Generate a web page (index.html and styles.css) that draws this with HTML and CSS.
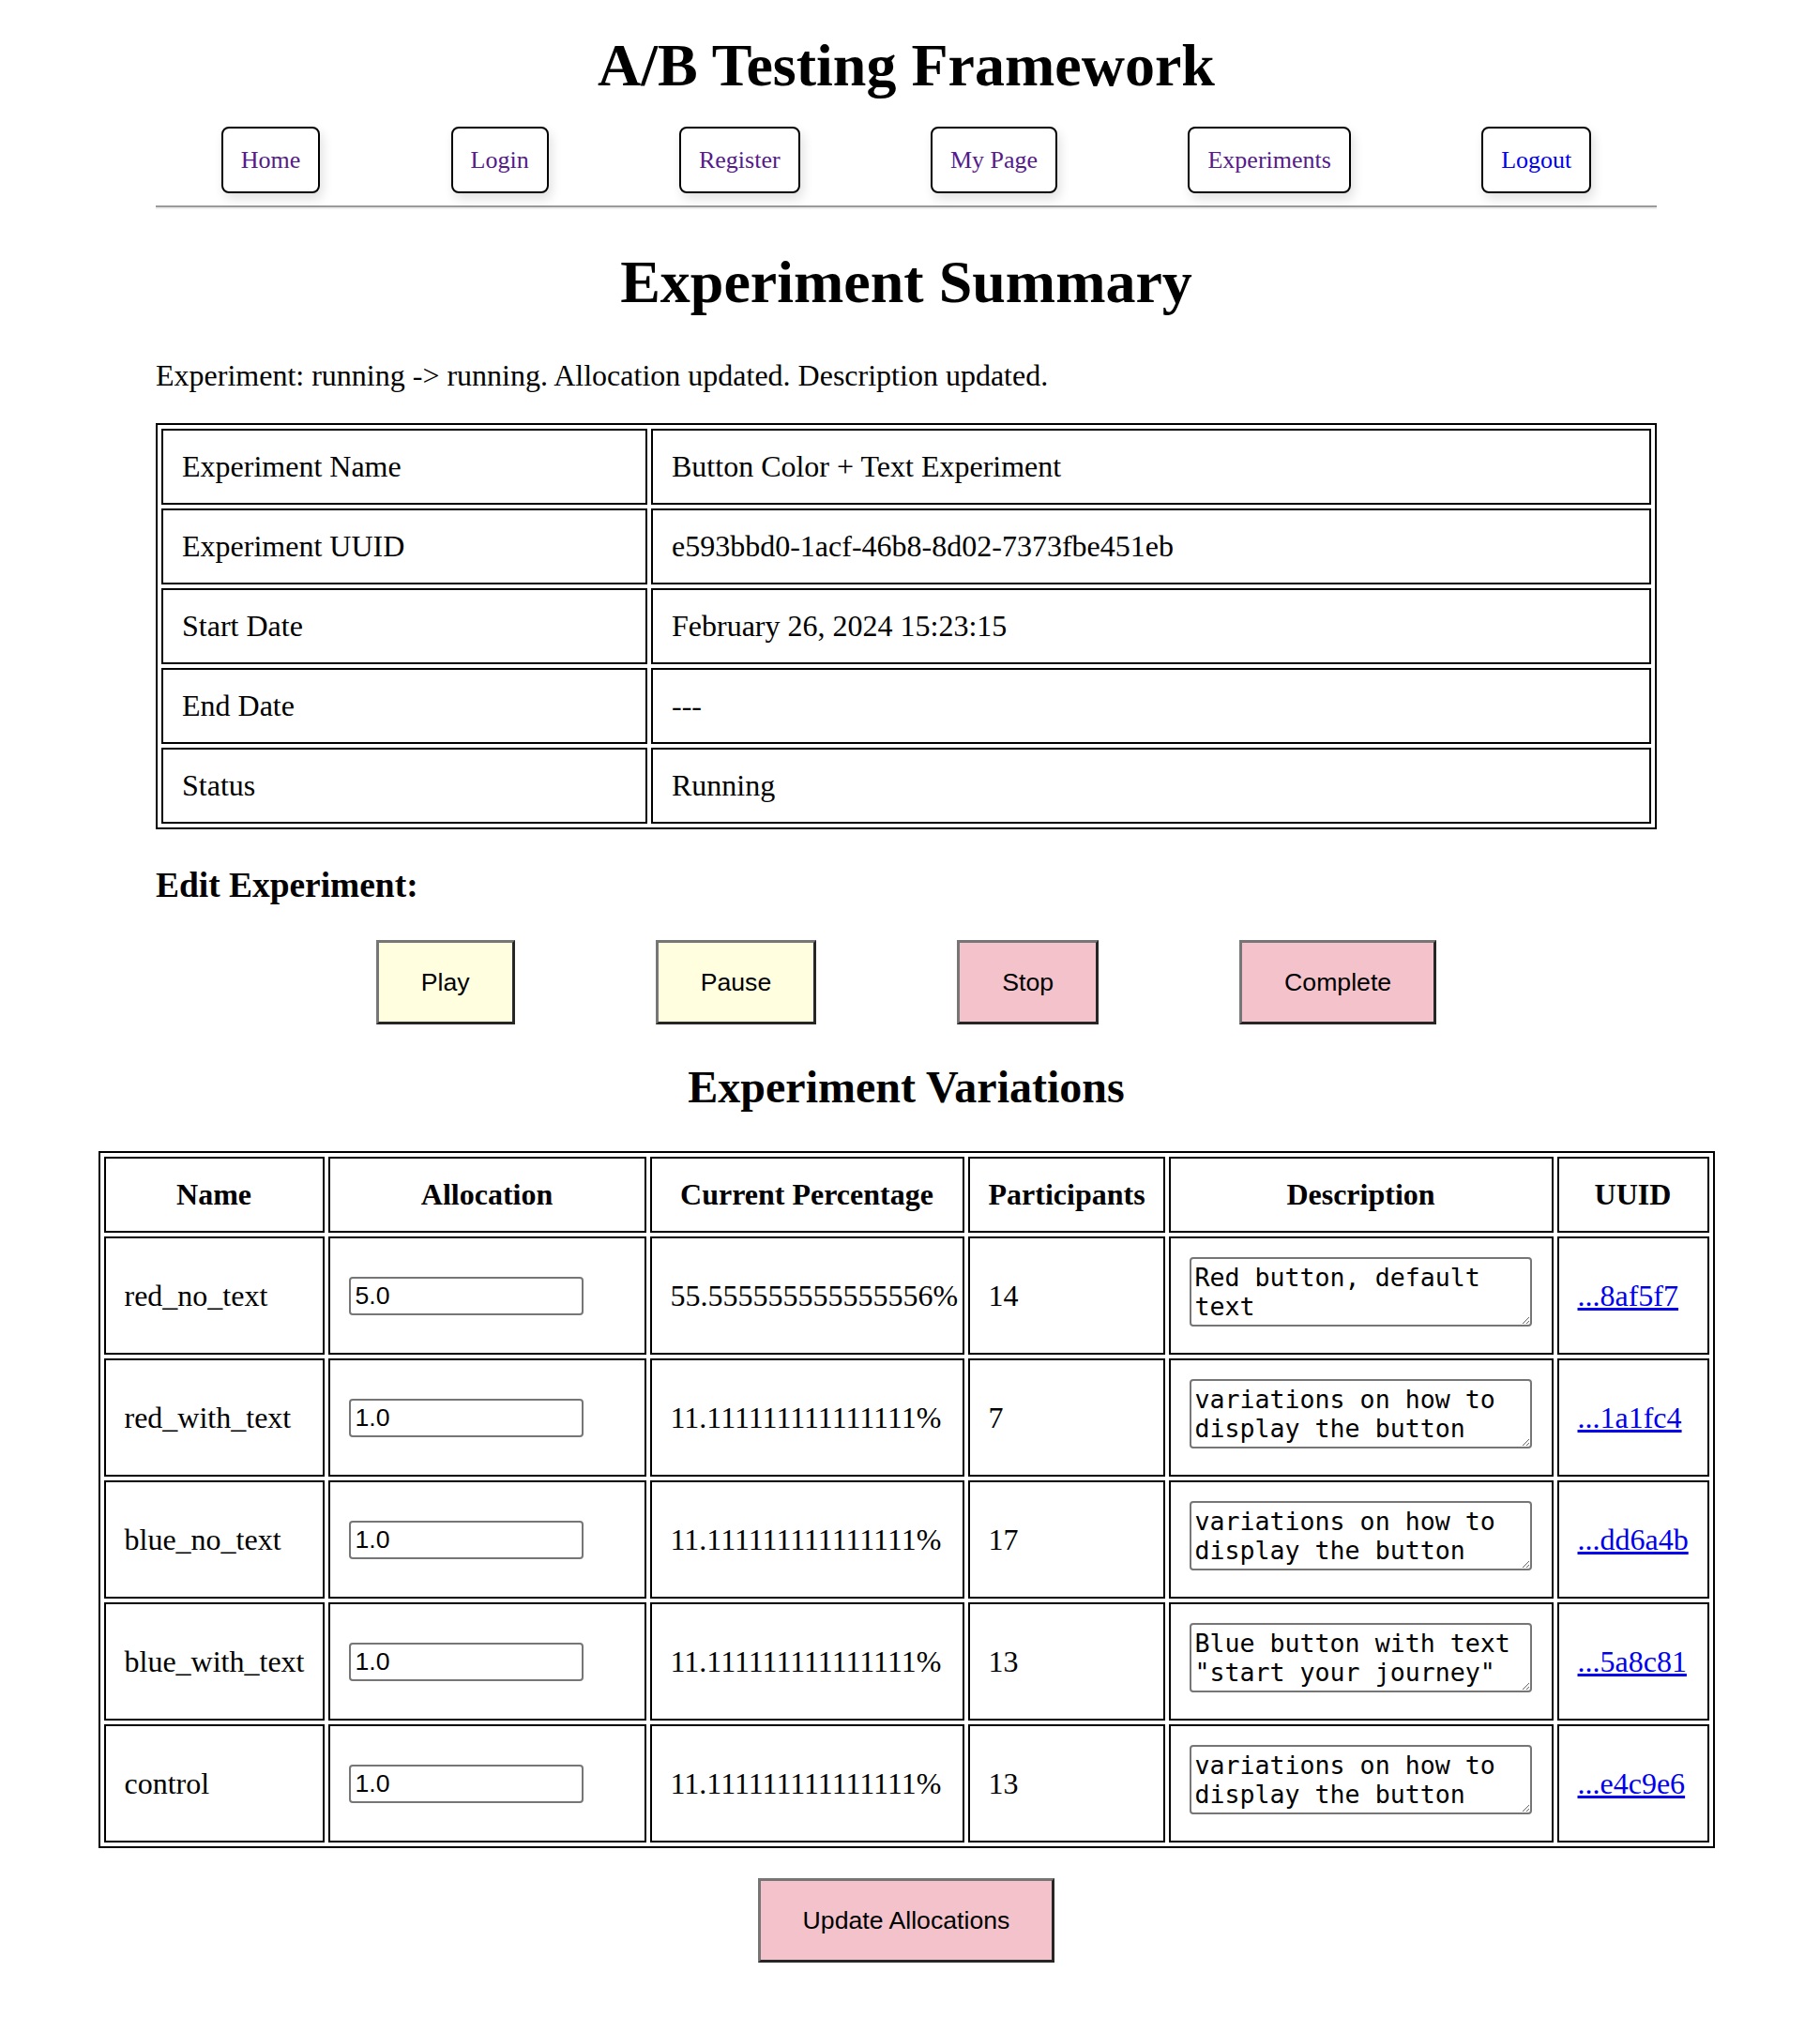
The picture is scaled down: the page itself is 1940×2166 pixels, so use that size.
FILE: index.html
```html
<!DOCTYPE html>
<html lang="en">
<head>
<meta charset="utf-8">
<title>Experiment Summary</title>
<link rel="stylesheet" href="styles.css">
</head>
<body>
<div class="page">
  <header class="site-header">
    <h1 class="site-title">A/B Testing Framework</h1>
    <nav class="nav">
      <a class="nav-link is-visited" href="#">Home</a>
      <a class="nav-link is-visited" href="#">Login</a>
      <a class="nav-link is-visited" href="#">Register</a>
      <a class="nav-link is-visited" href="#">My Page</a>
      <a class="nav-link is-visited" href="#">Experiments</a>
      <a class="nav-link" href="#">Logout</a>
    </nav>
    <hr class="divider">
  </header>

  <main>
    <section class="container">
      <h1 class="page-title">Experiment Summary</h1>
      <p class="flash">Experiment: running -&gt; running. Allocation updated. Description updated.</p>

      <table class="summary">
        <tr><td class="label-cell">Experiment Name</td><td>Button Color + Text Experiment</td></tr>
        <tr><td class="label-cell">Experiment UUID</td><td>e593bbd0-1acf-46b8-8d02-7373fbe451eb</td></tr>
        <tr><td class="label-cell">Start Date</td><td>February 26, 2024 15:23:15</td></tr>
        <tr><td class="label-cell">End Date</td><td>---</td></tr>
        <tr><td class="label-cell">Status</td><td>Running</td></tr>
      </table>

      <h3 class="section-label">Edit Experiment:</h3>
      <div class="actions">
        <button class="btn btn-go" type="button">Play</button>
        <button class="btn btn-go" type="button">Pause</button>
        <button class="btn btn-stop" type="button">Stop</button>
        <button class="btn btn-stop" type="button">Complete</button>
      </div>

      <h2 class="section-title">Experiment Variations</h2>
    </section>

    <table class="variations">
      <tr>
        <th class="col-name">Name</th>
        <th class="col-alloc">Allocation</th>
        <th class="col-pct">Current Percentage</th>
        <th class="col-part">Participants</th>
        <th class="col-desc">Description</th>
        <th class="col-uuid">UUID</th>
      </tr>
      <tr>
        <td>red_no_text</td>
        <td><input class="alloc-input" type="text" value="5.0"></td>
        <td class="nowrap">55.555555555555556%</td>
        <td>14</td>
        <td><textarea class="desc-input">Red button, default text</textarea></td>
        <td><a class="uuid-link" href="#">...8af5f7</a></td>
      </tr>
      <tr>
        <td>red_with_text</td>
        <td><input class="alloc-input" type="text" value="1.0"></td>
        <td class="nowrap">11.111111111111111%</td>
        <td>7</td>
        <td><textarea class="desc-input">variations on how to display the button</textarea></td>
        <td><a class="uuid-link" href="#">...1a1fc4</a></td>
      </tr>
      <tr>
        <td>blue_no_text</td>
        <td><input class="alloc-input" type="text" value="1.0"></td>
        <td class="nowrap">11.111111111111111%</td>
        <td>17</td>
        <td><textarea class="desc-input">variations on how to display the button</textarea></td>
        <td><a class="uuid-link" href="#">...dd6a4b</a></td>
      </tr>
      <tr>
        <td>blue_with_text</td>
        <td><input class="alloc-input" type="text" value="1.0"></td>
        <td class="nowrap">11.111111111111111%</td>
        <td>13</td>
        <td><textarea class="desc-input">Blue button with text "start your journey"</textarea></td>
        <td><a class="uuid-link" href="#">...5a8c81</a></td>
      </tr>
      <tr>
        <td>control</td>
        <td><input class="alloc-input" type="text" value="1.0"></td>
        <td class="nowrap">11.111111111111111%</td>
        <td>13</td>
        <td><textarea class="desc-input">variations on how to display the button</textarea></td>
        <td><a class="uuid-link" href="#">...e4c9e6</a></td>
      </tr>
    </table>

    <div class="submit-row">
      <button class="btn btn-stop" type="button">Update Allocations</button>
    </div>
  </main>
</div>
</body>
</html>
```

FILE: styles.css
```css
html,
body {
  margin: 0;
  padding: 0;
  background: #ffffff;
}

body {
  font-family: "Liberation Serif", "Times New Roman", serif;
  font-size: 32px;
  color: #000000;
}

.page {
  width: 1932px;
}

/* ---------- header ---------- */
.site-header {
  width: 1600px;
  margin: 0 auto;
  padding-top: 33px;
}

.site-title {
  margin: 0;
  font-size: 64px;
  line-height: 74px;
  font-weight: bold;
  text-align: center;
}

.nav {
  display: flex;
  justify-content: space-around;
  margin-top: 28px;
}

.nav-link {
  display: block;
  font-size: 26px;
  line-height: 31px;
  padding: 18px 19px;
  border: 2px solid #000000;
  border-radius: 8px;
  box-shadow: 3px 6px 12px rgba(0, 0, 0, 0.12);
  text-decoration: none;
  color: #0000ee;
}

.nav-link.is-visited {
  color: #551a8b;
}

.divider {
  margin: 13px 0 0;
  height: 0;
  border: 0;
  border-top: 2px solid #9a9a9a;
  border-bottom: 2px solid #eeeeee;
}

/* ---------- summary ---------- */
.container {
  width: 1600px;
  margin: 0 auto;
}

.page-title {
  margin: 41px 0 0;
  font-size: 64px;
  line-height: 74px;
  font-weight: bold;
  text-align: center;
}

.flash {
  margin: 44px 0 0;
  line-height: 37px;
}

.summary {
  margin-top: 32px;
  width: 100%;
  table-layout: fixed;
  border-collapse: separate;
  border-spacing: 4px;
  border: 2px solid #000000;
}

.summary td {
  box-sizing: border-box;
  border: 2px solid #000000;
  padding: 20px;
  line-height: normal;
}

.summary .label-cell {
  width: 518px;
}

.section-label {
  margin: 38px 0 0;
  font-size: 37.44px;
  line-height: normal;
  font-weight: bold;
}

.actions {
  display: flex;
  justify-content: center;
  gap: 150px;
  margin-top: 37px;
}

.btn {
  margin: 0;
  font-family: "Liberation Sans", Arial, sans-serif;
  font-size: 26.67px;
  line-height: 30px;
  padding: 27px 45px;
  border: 3px solid;
  border-color: #767676 #262626 #262626 #767676;
  color: #000000;
}

.btn-go {
  background: #ffffe0;
}

.btn-stop {
  background: #f4c2cb;
}

.section-title {
  margin: 39px 0 0;
  font-size: 48px;
  line-height: normal;
  font-weight: bold;
  text-align: center;
}

/* ---------- variations ---------- */
.variations {
  margin: 41px auto 0;
  width: 1723px;
  table-layout: fixed;
  border-collapse: separate;
  border-spacing: 4px;
  border: 2px solid #000000;
}

.variations th,
.variations td {
  box-sizing: border-box;
  border: 2px solid #000000;
  padding: 20px;
  line-height: normal;
}

.variations th {
  font-weight: bold;
  text-align: center;
}

.variations td {
  text-align: left;
}

.variations .nowrap {
  white-space: nowrap;
}

.col-name { width: 235px; }
.col-alloc { width: 339px; }
.col-pct { width: 335px; }
.col-part { width: 210px; }
.col-desc { width: 410px; }
.col-uuid { width: 162px; }

.alloc-input {
  box-sizing: border-box;
  width: 250px;
  height: 41px;
  margin: 0;
  padding: 0 5px;
  border: 2px solid #767676;
  border-radius: 4px;
  font-family: "Liberation Sans", Arial, sans-serif;
  font-size: 26.67px;
  color: #000000;
  background: #ffffff;
}

.desc-input {
  box-sizing: border-box;
  width: 365px;
  height: 74px;
  margin: 0;
  padding: 4px;
  border: 2px solid #767676;
  border-radius: 4px;
  font-family: "DejaVu Sans Mono", "Liberation Mono", monospace;
  font-size: 26.6px;
  line-height: normal;
  color: #000000;
  background: #ffffff;
  vertical-align: baseline;
}

.uuid-link {
  color: #0000ee;
  text-decoration: underline;
}

.submit-row {
  display: flex;
  justify-content: center;
  margin-top: 32px;
}
```
